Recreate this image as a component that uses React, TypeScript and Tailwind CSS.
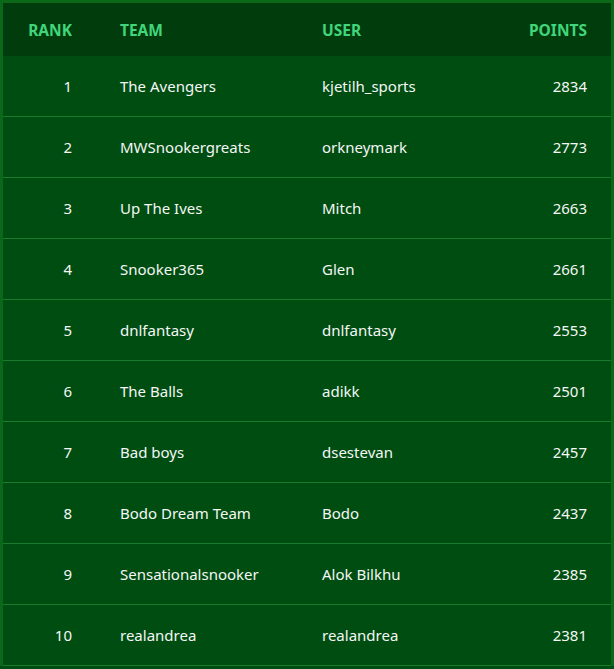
import React from "react";

const rows = [
  [1, "The Avengers", "kjetilh_sports", 2834],
  [2, "MWSnookergreats", "orkneymark", 2773],
  [3, "Up The Ives", "Mitch", 2663],
  [4, "Snooker365", "Glen", 2661],
  [5, "dnlfantasy", "dnlfantasy", 2553],
  [6, "The Balls", "adikk", 2501],
  [7, "Bad boys", "dsestevan", 2457],
  [8, "Bodo Dream Team", "Bodo", 2437],
  [9, "Sensationalsnooker", "Alok Bilkhu", 2385],
  [10, "realandrea", "realandrea", 2381],
] as const;

export default function App() {
  return (
    <div className="min-h-[669px] bg-[#004d12]" style={{ fontFamily: '"Noto Sans", "Open Sans", sans-serif' }}>
      <div className="border-[3px] border-b-0 border-[#0a6818] bg-[#004d12]">
        <div className="grid grid-cols-[93px_202px_1fr_auto] h-[53px] pt-[2px] items-center bg-[#003c0c] text-[15.5px] font-bold uppercase text-[#41d67c]">
          <div className="px-6 text-right">Rank</div>
          <div className="px-6">Team</div>
          <div className="px-6">User</div>
          <div className="px-6 text-right">Points</div>
        </div>
        {rows.map(([rank, team, user, pts]) => (
          <div
            key={rank}
            className="grid grid-cols-[93px_202px_1fr_auto] h-[61px] items-center border-b border-[#1a7a2e] text-[15px] text-[#f4f7f4]"
          >
            <div className="px-6 text-right">{rank}</div>
            <div className="px-6 whitespace-nowrap">{team}</div>
            <div className="px-6 whitespace-nowrap">{user}</div>
            <div className="px-6 text-right">{pts}</div>
          </div>
        ))}
      </div>
    </div>
  );
}
